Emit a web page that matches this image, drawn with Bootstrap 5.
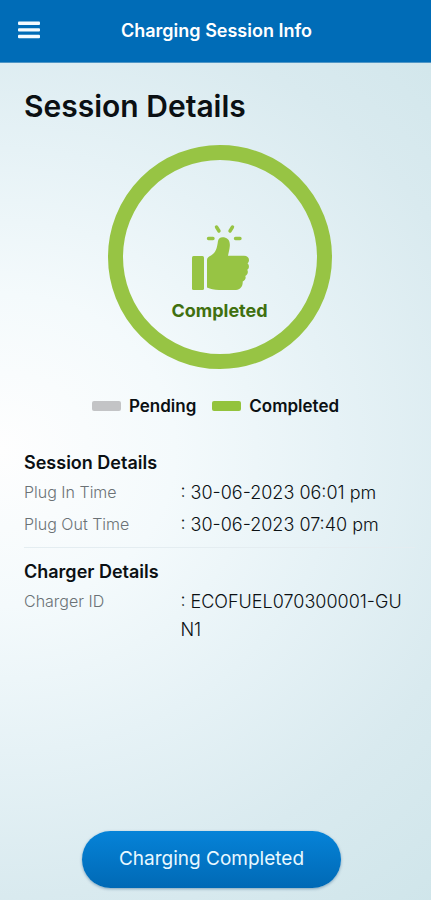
<!DOCTYPE html>
<html lang="en">
<head>
<meta charset="utf-8">
<meta name="viewport" content="width=device-width, initial-scale=1">
<title>Charging Session Info</title>
<link href="https://cdn.jsdelivr.net/npm/bootstrap@5.3.0/dist/css/bootstrap.min.css" rel="stylesheet">
<style>
body {
  font-family: Inter, "Liberation Sans", sans-serif;
  color: #0b1013;
  background: radial-gradient(ellipse 145% 62% at 0 50%, #fefefe 0%, #f4fafc 28%, #e6f2f6 54%, #d9eaef 80%, #cfe5ea 108%) #cfe5ea;
}
.app-bar { background: #006cb7; min-height: 63px; border-bottom: 1px solid #4f96c6; }
.app-title { font-size: 18px; line-height: 24px; font-weight: 600; }
.page-title { font-size: 30px; line-height: 38px; font-weight: 600; }
.status-ring { width: 224px; height: 224px; border: 15px solid #97c444; }
.status-label { font-size: 18px; line-height: 24px; font-weight: 700; color: #40700f; }
.legend { font-size: 17px; line-height: 26px; font-weight: 600; }
.swatch { width: 29px; height: 10px; border-radius: 2px; }
.swatch-pending { background: #c3c4c6; }
.swatch-done { background: #93c33c; }
.section-title { font-size: 18px; line-height: 24px; font-weight: 600; }
.term { font-size: 16px; line-height: 26px; font-weight: 300; color: #6b7276; width: 40%; }
.value { font-size: 18px; line-height: 28px; font-weight: 300; word-break: break-all; }
.rule { border-top: 1px solid #e4edf1; }
.btn-done {
  width: 69%; min-height: 57px; border: 0;
  font-size: 19px; color: #e9f8ff;
  background: linear-gradient(#0683d8, #0069b5);
  box-shadow: 0 1px 3px rgba(0, 60, 110, .4);
}
.btn-done:hover { color: #fff; background: #0069b5; }
</style>
</head>
<body class="min-vh-100 d-flex flex-column">
<header class="app-bar d-flex align-items-center px-3">
  <button type="button" class="btn p-0 border-0 d-flex" aria-label="Open menu">
    <svg width="26" height="20" viewBox="0 0 26 20" fill="#f4fbff" aria-hidden="true">
      <rect x="2" y="0.600" width="22" height="3.4" rx="1"/>
      <rect x="2" y="7.200" width="22" height="3.4" rx="1"/>
      <rect x="2" y="13.800" width="22" height="3.4" rx="1"/>
    </svg>
  </button>
  <div class="app-title flex-grow-1 text-center text-white pe-4">Charging Session Info</div>
</header>

<main class="flex-grow-1 d-flex flex-column ps-4 pe-3 pt-4">
  <h1 class="page-title mb-3 pb-1">Session Details</h1>

  <div class="status-ring rounded-circle align-self-center d-flex flex-column align-items-center justify-content-center pt-3">
    <svg width="60" height="68" viewBox="0 0 60 68" fill="#97c444" aria-hidden="true" class="mt-3 mb-2">
      <rect x="2" y="33" width="12" height="34" rx="1.5"/>
      <path d="M17 37 C17 34.500 19 33.800 21 32.600 C26 29.500 27 25 28 18 C28.400 14.800 31 13.700 34 14.300 C38.500 15.200 40.200 18.500 39.800 23 C39.500 27 38.500 30 38 32.800 H54 C57 32.800 59 34.500 59 37 C59 38.500 58.400 39.600 57.500 40.300 C59.500 42 59.400 45.500 57.200 46.800 C58.600 49 57.600 52 55.300 53 C56.300 55.300 55 57.700 52.700 58.500 C53 63.500 50.500 66.500 46 67 H29 C24 67 20.500 65.800 17 64.500 Z"/>
      <g stroke="#97c444" stroke-width="3.4" stroke-linecap="round">
        <path d="M18.500 15.500 H23 M45.500 15.500 H50 M26.500 4 L29 8 M42.500 4 L40 8"/>
      </g>
    </svg>
    <div class="status-label">Completed</div>
  </div>

  <div class="legend d-flex justify-content-center gap-3 mt-4 me-2">
    <div class="d-flex align-items-center gap-2"><span class="swatch swatch-pending"></span>Pending</div>
    <div class="d-flex align-items-center gap-2"><span class="swatch swatch-done"></span>Completed</div>
  </div>

  <section class="mt-4 pt-2">
    <h2 class="section-title mb-1">Session Details</h2>
    <dl class="mb-0">
      <div class="d-flex mb-1"><dt class="term flex-shrink-0">Plug In Time</dt><dd class="value mb-0">: 30-06-2023 06:01 pm</dd></div>
      <div class="d-flex"><dt class="term flex-shrink-0">Plug Out Time</dt><dd class="value mb-0">: 30-06-2023 07:40 pm</dd></div>
    </dl>
  </section>

  <section class="rule mt-2 pt-2">
    <h2 class="section-title mt-1 mb-1">Charger Details</h2>
    <dl class="mb-4">
      <div class="d-flex"><dt class="term flex-shrink-0">Charger ID</dt><dd class="value mb-0 pe-2">: ECOFUEL070300001-GUN1</dd></div>
    </dl>
  </section>

  <div class="mt-auto text-center pe-3 pb-2 mb-1">
    <button type="button" class="btn btn-done rounded-pill">Charging Completed</button>
  </div>
</main>
<script src="https://cdn.jsdelivr.net/npm/bootstrap@5.3.0/dist/js/bootstrap.bundle.min.js"></script>
</body>
</html>
